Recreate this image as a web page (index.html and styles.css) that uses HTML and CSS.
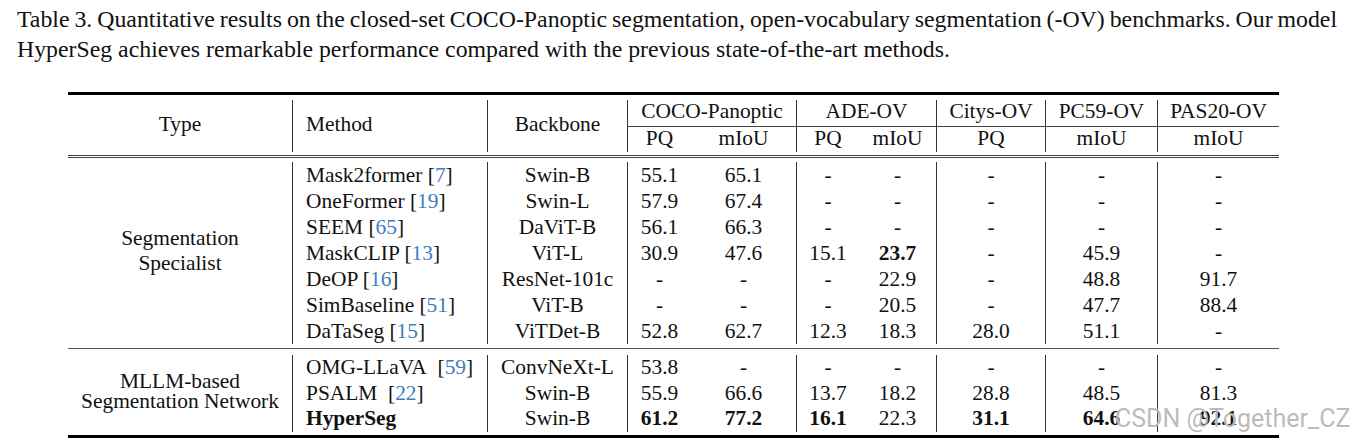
FILE: index.html
```html
<!DOCTYPE html>
<html lang="en">
<head>
<meta charset="utf-8">
<title>Table 3</title>
<link rel="stylesheet" href="styles.css">
</head>
<body>
<div class="page">
  <p class="caption">
    <span class="cap-line cap-full">Table 3. Quantitative results on the closed-set COCO-Panoptic segmentation, open-vocabulary segmentation (-OV) benchmarks. Our model</span>
    <span class="cap-line">HyperSeg achieves remarkable performance compared with the previous state-of-the-art methods.</span>
  </p>
  <table class="results">
    <colgroup>
      <col class="c-type"><col class="c-method"><col class="c-backbone">
      <col class="c-coco-pq"><col class="c-coco-miou">
      <col class="c-ade-pq"><col class="c-ade-miou">
      <col class="c-citys"><col class="c-pc59"><col class="c-pas20">
    </colgroup>
    <tbody>
      <tr class="rule-row"><td colspan="10"><div class="toprule"></div></td></tr>
      <tr class="head">
        <th rowspan="2" class="span-head">Type</th>
        <th rowspan="2" class="vl span-head method">Method</th>
        <th rowspan="2" class="vl span-head">Backbone</th>
        <th colspan="2" class="vl cmid">COCO-Panoptic</th>
        <th colspan="2" class="vl cmid">ADE-OV</th>
        <th class="vl cmid">Citys-OV</th>
        <th class="vl cmid">PC59-OV</th>
        <th class="vl cmid">PAS20-OV</th>
      </tr>
      <tr class="head2">
        <th class="vl">PQ</th><th>mIoU</th>
        <th class="vl">PQ</th><th>mIoU</th>
        <th class="vl">PQ</th>
        <th class="vl">mIoU</th>
        <th class="vl">mIoU</th>
      </tr>
      <tr class="rule-row"><td colspan="10"><div class="doublerule"></div></td></tr>

      <tr>
        <td rowspan="7" class="group">Segmentation<br>Specialist</td>
        <td class="vl method">Mask2former [<span class="cite">7</span>]</td>
        <td class="vl">Swin-B</td>
        <td class="vl">55.1</td><td>65.1</td>
        <td class="vl">-</td><td>-</td>
        <td class="vl">-</td><td class="vl">-</td><td class="vl">-</td>
      </tr>
      <tr>
        <td class="vl method">OneFormer [<span class="cite">19</span>]</td>
        <td class="vl">Swin-L</td>
        <td class="vl">57.9</td><td>67.4</td>
        <td class="vl">-</td><td>-</td>
        <td class="vl">-</td><td class="vl">-</td><td class="vl">-</td>
      </tr>
      <tr>
        <td class="vl method">SEEM [<span class="cite">65</span>]</td>
        <td class="vl">DaViT-B</td>
        <td class="vl">56.1</td><td>66.3</td>
        <td class="vl">-</td><td>-</td>
        <td class="vl">-</td><td class="vl">-</td><td class="vl">-</td>
      </tr>
      <tr>
        <td class="vl method">MaskCLIP [<span class="cite">13</span>]</td>
        <td class="vl">ViT-L</td>
        <td class="vl">30.9</td><td>47.6</td>
        <td class="vl">15.1</td><td class="best">23.7</td>
        <td class="vl">-</td><td class="vl">45.9</td><td class="vl">-</td>
      </tr>
      <tr>
        <td class="vl method">DeOP [<span class="cite">16</span>]</td>
        <td class="vl">ResNet-101c</td>
        <td class="vl">-</td><td>-</td>
        <td class="vl">-</td><td>22.9</td>
        <td class="vl">-</td><td class="vl">48.8</td><td class="vl">91.7</td>
      </tr>
      <tr>
        <td class="vl method">SimBaseline [<span class="cite">51</span>]</td>
        <td class="vl">ViT-B</td>
        <td class="vl">-</td><td>-</td>
        <td class="vl">-</td><td>20.5</td>
        <td class="vl">-</td><td class="vl">47.7</td><td class="vl">88.4</td>
      </tr>
      <tr>
        <td class="vl method">DaTaSeg [<span class="cite">15</span>]</td>
        <td class="vl">ViTDet-B</td>
        <td class="vl">52.8</td><td>62.7</td>
        <td class="vl">12.3</td><td>18.3</td>
        <td class="vl">28.0</td><td class="vl">51.1</td><td class="vl">-</td>
      </tr>

      <tr class="rule-row"><td colspan="10"><div class="midrule"></div></td></tr>

      <tr class="sec2">
        <td rowspan="3" class="group group2">MLLM-based<br>Segmentation Network</td>
        <td class="vl method">OMG-LLaVA&nbsp;&nbsp;[<span class="cite">59</span>]</td>
        <td class="vl">ConvNeXt-L</td>
        <td class="vl">53.8</td><td>-</td>
        <td class="vl">-</td><td>-</td>
        <td class="vl">-</td><td class="vl">-</td><td class="vl">-</td>
      </tr>
      <tr class="sec2">
        <td class="vl method">PSALM&nbsp;&nbsp;[<span class="cite">22</span>]</td>
        <td class="vl">Swin-B</td>
        <td class="vl">55.9</td><td>66.6</td>
        <td class="vl">13.7</td><td>18.2</td>
        <td class="vl">28.8</td><td class="vl">48.5</td><td class="vl">81.3</td>
      </tr>
      <tr class="sec2">
        <td class="vl method best">HyperSeg</td>
        <td class="vl">Swin-B</td>
        <td class="vl best">61.2</td><td class="best">77.2</td>
        <td class="vl best">16.1</td><td>22.3</td>
        <td class="vl best">31.1</td><td class="vl best">64.6</td><td class="vl best">92.1</td>
      </tr>

      <tr class="rule-row"><td colspan="10"><div class="bottomrule"></div></td></tr>
    </tbody>
  </table>
  <div class="watermark">CSDN @Together_CZ</div>
</div>
</body>
</html>
```

FILE: styles.css
```css
* {
  box-sizing: border-box;
}

html, body {
  margin: 0;
  padding: 0;
  background: #ffffff;
}

body {
  font-family: "Liberation Serif", "Times New Roman", serif;
  color: #111111;
}

.page {
  position: relative;
  width: 1354px;
  height: 446px;
  overflow: hidden;
  padding-top: 4px;
}

.caption {
  margin: 0 0 0 17px;
  width: 1320px;
  font-size: 23.8px;
  line-height: 30px;
}

.cap-line {
  display: block;
  white-space: nowrap;
}

.cap-full {
  text-align: justify;
  text-align-last: justify;
  word-spacing: -2px;
}

.results {
  margin: 28px 0 0 68px;
  width: 1211px;
  table-layout: fixed;
  border-collapse: separate;
  border-spacing: 0;
  font-size: 21.4px;
}

.c-type { width: 224px; }
.c-method { width: 195px; }
.c-backbone { width: 140px; }
.c-coco-pq { width: 64px; }
.c-coco-miou { width: 105px; }
.c-ade-pq { width: 63px; }
.c-ade-miou { width: 77px; }
.c-citys { width: 109px; }
.c-pc59 { width: 112px; }
.c-pas20 { width: 122px; }

.results th,
.results td {
  padding: 0;
  font-weight: normal;
  text-align: center;
  vertical-align: middle;
  white-space: nowrap;
  height: 26px;
  line-height: 26px;
}

.results .head th {
  height: 27px;
  line-height: 22px;
  padding-bottom: 4px;
}

.results .head th.span-head {
  height: auto;
  line-height: 26px;
  padding-bottom: 4px;
}

.results .head2 th {
  height: 25px;
  line-height: 23px;
  padding-bottom: 2px;
}

.results .vl {
  border-left: 1px solid #333333;
}

.results .cmid {
  border-bottom: 1px solid #444444;
}

.results .method {
  text-align: left;
  padding-left: 13px;
}

.results .cite {
  color: #3b7dbf;
}

.results .best {
  font-weight: bold;
}

.results .group {
  line-height: 25px;
  padding-bottom: 4px;
}

.results .sec2 td {
  height: 25.5px;
  line-height: 25.5px;
}

.results .sec2 .group2 {
  line-height: 20px;
  padding-bottom: 4px;
}

.results .rule-row td {
  height: auto;
  line-height: 0;
  font-size: 0;
  padding: 0;
}

.toprule {
  height: 3px;
  background: #000000;
  margin-bottom: 5px;
}

.doublerule {
  margin-top: 3px;
  height: 3px;
  border-top: 1px solid #444444;
  border-bottom: 1px solid #444444;
  margin-bottom: 4px;
}

.midrule {
  margin-top: 4px;
  height: 1px;
  background: #555555;
  margin-bottom: 6px;
}

.bottomrule {
  margin-top: 3.5px;
  height: 3px;
  background: #000000;
}

.watermark {
  position: absolute;
  left: 1115px;
  top: 404px;
  font-family: Roboto, "Liberation Sans", sans-serif;
  font-size: 25px;
  line-height: 30px;
  color: rgba(165, 165, 165, 0.75);
  text-shadow: 0 0 1px rgba(255, 255, 255, 0.9);
  white-space: nowrap;
}
```
